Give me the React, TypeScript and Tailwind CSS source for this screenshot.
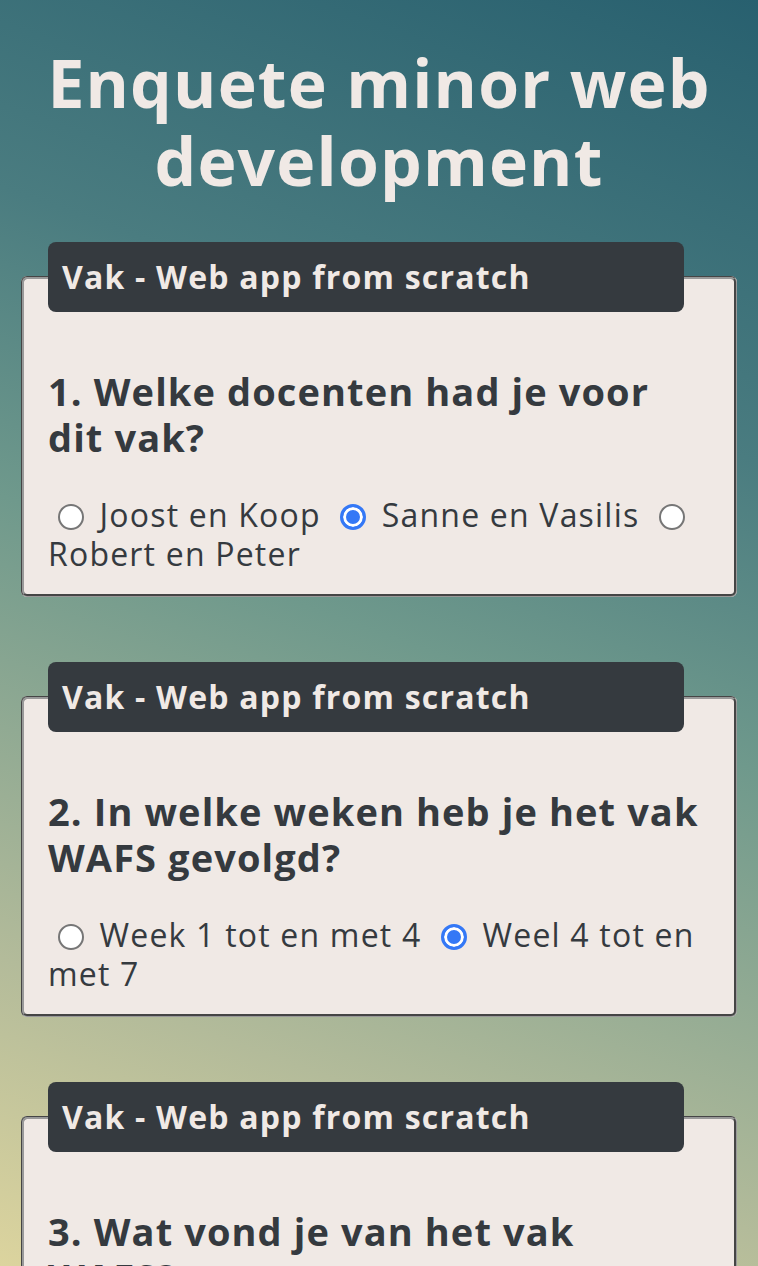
import React from "react";

const font = { fontFamily: '"Open Sans", "Liberation Sans", sans-serif' };

type Opt = { label: string; checked?: boolean };

function Radio({ name, opt }: { name: string; opt: Opt }) {
  return (
    <>
      {" "}
      <input
        type="radio"
        name={name}
        defaultChecked={opt.checked}
        className="appearance-none inline-block align-[-3px] w-[26px] h-[26px] ml-[10px] mr-[6px] rounded-full bg-white border-[2px] border-[#767676] checked:border-[3px] checked:border-[#3478f6] checked:bg-[#3478f6] checked:shadow-[inset_0_0_0_3px_#ffffff]"
      />{" "}
      <label>{opt.label}</label>
    </>
  );
}

function Question({
  n,
  title,
  name,
  opts,
}: {
  n: number;
  title: React.ReactNode;
  name: string;
  opts: Opt[];
}) {
  return (
    <fieldset className="m-0 bg-[#f0e9e5] text-[#353a3f] rounded-[6px] border-[3px] [border-style:groove] border-[#999999] px-[24px] pb-[21px] pt-0">
      <legend className="w-[636px] bg-[#353a3f] text-[#f0e9e5] rounded-[8px] px-[14px] py-[16px] text-[32px] leading-[38px] font-bold tracking-[1.2px]">
        Vak - Web app from scratch
      </legend>
      <h2 className="mt-[56px] text-[38px] leading-[46px] font-bold tracking-[1.1px]">
        {n}. {title}
      </h2>
      <div className="mt-[35px] text-[32px] leading-[39px] tracking-[1.2px]">
        {opts.map((o, i) => (
          <Radio key={i} name={name} opt={o} />
        ))}
      </div>
    </fieldset>
  );
}

export default function App() {
  return (
    <div
      style={font}
      className="h-[1266px] overflow-hidden bg-[linear-gradient(200deg,#28606f_0%,#4a7c80_30%,#6f998c_50%,#b3bb9a_80%,#dcd49e_100%)] px-[21px]"
    >
      <h1 className="pt-[43px] text-center text-[66px] leading-[78px] font-bold tracking-[1.2px] text-[#f0e9e5]">
        Enquete minor web
        <br />
        development
      </h1>
      <div className="mt-[43px] flex flex-col gap-[65px]">
        <Question
          n={1}
          name="q1"
          title={
            <>
              Welke docenten had je voor
              <br />
              dit vak?
            </>
          }
          opts={[
            { label: "Joost en Koop" },
            { label: "Sanne en Vasilis", checked: true },
            { label: "Robert en Peter" },
          ]}
        />
        <Question
          n={2}
          name="q2"
          title={
            <>
              In welke weken heb je het vak
              <br />
              WAFS gevolgd?
            </>
          }
          opts={[
            { label: "Week 1 tot en met 4" },
            { label: "Weel 4 tot en met 7", checked: true },
          ]}
        />
        <Question
          n={3}
          name="q3"
          title={
            <>
              Wat vond je van het vak
              <br />
              WAFS?
            </>
          }
          opts={[{ label: "Goed" }, { label: "Slecht" }]}
        />
      </div>
    </div>
  );
}
